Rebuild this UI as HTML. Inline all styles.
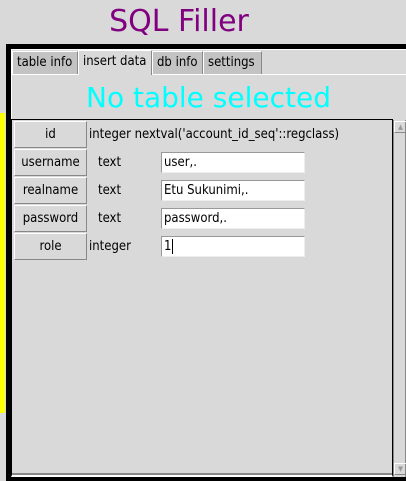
<!DOCTYPE html>
<html><head><style>
*{margin:0;padding:0;box-sizing:border-box}
body{width:406px;height:481px;background:#d9d9d9;position:relative;overflow:hidden;font-family:"DejaVu Sans Condensed","DejaVu Sans","Liberation Sans",sans-serif;font-size:13px;color:#000}
.a{position:absolute}
.tab{position:absolute;top:51px;height:23px;background:#c3c3c3;border-top:1px solid #fff;border-left:1px solid #fff;border-right:1px solid #888;line-height:21px;padding-left:4px;white-space:nowrap}
.lbl{position:absolute;left:14px;width:73px;height:27px;border-top:1px solid #fff;border-left:1px solid #fff;border-right:1px solid #888;border-bottom:1px solid #888;text-align:center;line-height:25px;background:#d9d9d9}
.typ{position:absolute;line-height:27px}
.inp{position:absolute;left:161px;width:144px;height:21px;background:#fff;border-top:1px solid #999;border-left:1px solid #999;border-bottom:1px solid #eee;border-right:1px solid #eee;line-height:19px;padding-left:2px}
</style></head><body>
<div class="a" style="left:0;width:406px;text-align:center;padding-right:48px;top:2px;font-family:'DejaVu Sans',sans-serif;font-size:30px;color:#800080;line-height:40px">SQL Filler</div>
<div class="a" style="left:0;top:113px;width:5px;height:300px;background:#ff0"></div>
<div class="a" style="left:6px;top:44px;width:400px;height:437px;background:#000"></div>
<div class="a" style="left:11px;top:49px;width:395px;height:427px;background:#d9d9d9;border-left:1px solid #fff;border-top:1px solid #fff"></div>
<div class="a" style="left:11px;top:74px;width:395px;height:1px;background:#fff"></div>
<div class="tab" style="left:12px;width:66px">table info</div>
<div class="tab" style="left:78px;width:74px;background:#d9d9d9;top:50px;height:25px;border-bottom:none">insert data</div>
<div class="tab" style="left:152px;width:51px">db info</div>
<div class="tab" style="left:203px;width:59px">settings</div>
<div class="a" style="left:11px;top:80px;width:395px;text-align:center;font-family:'DejaVu Sans',sans-serif;font-size:28px;color:#0ff;line-height:36px">No table selected</div>
<div class="a" style="left:11px;top:119px;width:382px;height:358px;border:1px solid #000;border-bottom:2px solid #fff;box-shadow:inset 0 -2px 0 #888"></div>
<div class="a" style="left:393px;top:120px;width:13px;height:357px;background:#d9d9d9;border-left:1px solid #888;border-right:1px solid #888"></div>
<div class="a" style="left:394px;top:121px;width:12px;height:12px;border-top:1px solid #fff;border-left:1px solid #fff;border-bottom:1px solid #888;font-size:7px;color:#999;text-align:center;line-height:10px">▲</div>
<div class="a" style="left:394px;top:463px;width:12px;height:12px;border-top:1px solid #fff;border-left:1px solid #fff;border-bottom:1px solid #888;font-size:7px;color:#999;text-align:center;line-height:10px">▼</div>
<div class="lbl" style="top:121px">id</div>
<div class="typ" style="left:89px;top:121px">integer nextval('account_id_seq'::regclass)</div>
<div class="lbl" style="top:149px">username</div>
<div class="typ" style="left:98px;top:149px">text</div>
<div class="inp" style="top:152px">user,.</div>
<div class="lbl" style="top:177px">realname</div>
<div class="typ" style="left:98px;top:177px">text</div>
<div class="inp" style="top:180px">Etu Sukunimi,.</div>
<div class="lbl" style="top:205px">password</div>
<div class="typ" style="left:98px;top:205px">text</div>
<div class="inp" style="top:208px">password,.</div>
<div class="lbl" style="top:233px">role</div>
<div class="typ" style="left:89px;top:233px">integer</div>
<div class="inp" style="top:236px">1<span style="display:inline-block;width:1px;height:15px;background:#000;vertical-align:middle;margin-left:1px"></span></div>
</body></html>
